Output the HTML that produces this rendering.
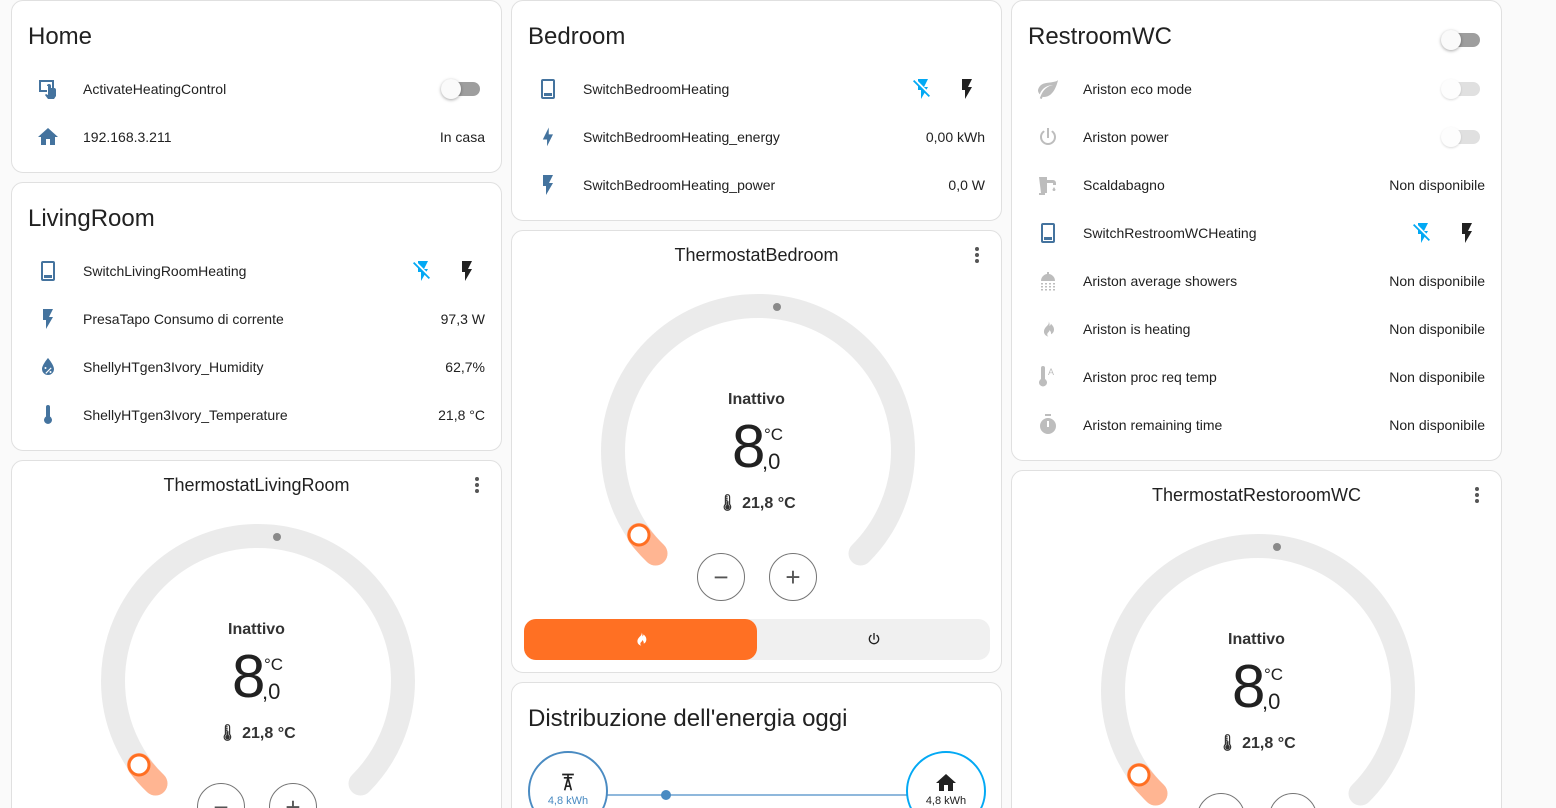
<!DOCTYPE html>
<html style="height:808px;overflow:hidden"><head><meta charset="utf-8"><style>
*{box-sizing:border-box;margin:0;padding:0}
body{width:1556px;height:808px;overflow:hidden;background:#fafafa;font-family:"Liberation Sans",Roboto,sans-serif;color:#212121;position:relative}
.card{position:absolute;background:#fff;border:1px solid #e0e0e0;border-radius:12px;overflow:hidden}
.title{position:absolute;left:16px;font-size:24px;color:#212121}
.row{position:absolute;left:0;right:0;height:40px;font-size:14px;display:flex;align-items:center}
.row svg.ic{position:absolute;left:24px;width:24px;height:24px}
.row .n{position:absolute;left:71px}
.row .v{position:absolute;right:16px}
.tg{position:absolute;right:21px;width:36px;height:14px;border-radius:7px;background:#9e9e9e}
.tg::after{content:"";position:absolute;left:-3px;top:-3px;width:20px;height:20px;border-radius:50%;background:#fafafa;box-shadow:0 1px 3px rgba(0,0,0,.35)}
.tg.d{background:#e0e0e0}
.tg.d::after{background:#fdfdfd;box-shadow:0 1px 2px rgba(0,0,0,.15)}
.th-title{position:absolute;left:0;right:0;top:14px;text-align:center;font-size:18px}
.dots{position:absolute;right:22px;top:16px;width:4px}
.dots i{display:block;width:4px;height:4px;border-radius:50%;background:#555;margin-bottom:2px}
.gauge{position:absolute;width:340px;height:300px}
.btn{position:absolute;width:48px;height:48px;border:1px solid #757575;border-radius:50%;font-size:26px;color:#555;display:flex;align-items:center;justify-content:center;font-weight:300}
.st{position:absolute;left:0;right:0;text-align:center}
</style></head><body>

<!-- Home -->
<div class="card" style="left:11px;top:0px;width:491px;height:173px">
 <div class="title" style="top:22px">Home</div>
 <div class="row" style="top:68px"><svg class="ic" viewBox="0 0 24 24" fill="#44739e"><path d="M3 3h15v10h-2V5H5v8h6v2H3z M11 9a2 2 0 0 1 4 0v2h3a2 2 0 0 1 2 2v6l-2 3h-6l-3-4 1-1 2 1V9z"/></svg><span class="n">ActivateHeatingControl</span><span class="tg"></span></div>
 <div class="row" style="top:116px"><svg class="ic" viewBox="0 0 24 24" fill="#44739e"><path d="M10,20V14H14V20H19V12H22L12,3L2,12H5V20H10Z"/></svg><span class="n">192.168.3.211</span><span class="v">In casa</span></div>
</div>

<!-- LivingRoom -->
<div class="card" style="left:11px;top:182px;width:491px;height:269px">
 <div class="title" style="top:22px">LivingRoom</div>
 <div class="row" style="top:68px"><svg class="ic" viewBox="0 0 24 24" fill="#44739e"><path d="M7 2h10a2 2 0 0 1 2 2v16a2 2 0 0 1-2 2H7a2 2 0 0 1-2-2V4a2 2 0 0 1 2-2zm0 2v16h10V4zm1 12h8v3H8z"/></svg><span class="n">SwitchLivingRoomHeating</span>
  <svg style="position:absolute;left:399px;width:24px;height:24px" viewBox="0 0 24 24" fill="#03a9f4"><path d="M17,10H13L17,2H7V4.18L15.46,12.64M3.27,3L2,4.27L7,9.27V13H10V22L13.58,15.86L17.73,20L19,18.73L3.27,3Z"/></svg>
  <svg style="position:absolute;left:443px;width:24px;height:24px" viewBox="0 0 24 24" fill="#212121"><path d="M7,2V13H10V22L17,10H13L17,2H7Z"/></svg></div>
 <div class="row" style="top:116px"><svg class="ic" viewBox="0 0 24 24" fill="#44739e"><path d="M7,2V13H10V22L17,10H13L17,2H7Z"/></svg><span class="n">PresaTapo Consumo di corrente</span><span class="v">97,3 W</span></div>
 <div class="row" style="top:164px"><svg class="ic" viewBox="0 0 24 24" fill="#44739e"><path d="M12 3s-6 7-6 11a6 6 0 0 0 12 0c0-4-6-11-6-11zm-2.5 9a1 1 0 1 1 0 2 1 1 0 0 1 0-2zm5 4a1 1 0 1 1 0 2 1 1 0 0 1 0-2zm.3-3.5l.8.8-5.4 5.4-.8-.8z"/></svg><span class="n">ShellyHTgen3Ivory_Humidity</span><span class="v">62,7%</span></div>
 <div class="row" style="top:212px"><svg class="ic" viewBox="0 0 24 24" fill="#44739e"><path d="M10 4a2 2 0 0 1 4 0v9.5a4 4 0 1 1-4 0z"/></svg><span class="n">ShellyHTgen3Ivory_Temperature</span><span class="v">21,8 °C</span></div>
</div>

<!-- Thermostat LivingRoom -->
<div class="card" style="left:11px;top:460px;width:491px;height:380px">
 <div class="th-title">ThermostatLivingRoom</div>
 <div class="dots"><i></i><i></i><i></i></div>
 <svg class="gauge" style="left:76px;top:50px" viewBox="0 0 340 300">
  <path d="M67.5 272.5 A145 145 0 1 1 272.5 272.5" fill="none" stroke="#ebebeb" stroke-width="24" stroke-linecap="round"/>
  <path d="M51 254 A145 145 0 0 0 67.5 272.5" fill="none" stroke="#ffb592" stroke-width="24" stroke-linecap="round"/>
  <circle cx="51" cy="254" r="10" fill="#fff" stroke="#ff6f22" stroke-width="3"/>
  <circle cx="189" cy="26" r="4" fill="#8a8a8a"/>
 </svg>
 <div class="st" style="top:160px;font-size:16px;font-weight:bold;color:#333">Inattivo</div>
 <div style="position:absolute;left:220px;top:186px;font-size:60px;line-height:60px">8</div>
 <div style="position:absolute;left:252px;top:194px;font-size:17px">°C</div>
 <div style="position:absolute;left:250px;top:218px;font-size:22px">,0</div>
 <div class="st" style="top:262px;font-size:16px;font-weight:bold;color:#333">🌡︎ 21,8 °C</div>
 <div class="btn" style="left:185px;top:322px">−</div>
 <div class="btn" style="left:257px;top:322px">+</div>
</div>

<!-- Bedroom -->
<div class="card" style="left:511px;top:0px;width:491px;height:221px">
 <div class="title" style="top:22px">Bedroom</div>
 <div class="row" style="top:68px"><svg class="ic" viewBox="0 0 24 24" fill="#44739e"><path d="M7 2h10a2 2 0 0 1 2 2v16a2 2 0 0 1-2 2H7a2 2 0 0 1-2-2V4a2 2 0 0 1 2-2zm0 2v16h10V4zm1 12h8v3H8z"/></svg><span class="n">SwitchBedroomHeating</span>
  <svg style="position:absolute;left:399px;width:24px;height:24px" viewBox="0 0 24 24" fill="#03a9f4"><path d="M17,10H13L17,2H7V4.18L15.46,12.64M3.27,3L2,4.27L7,9.27V13H10V22L13.58,15.86L17.73,20L19,18.73L3.27,3Z"/></svg>
  <svg style="position:absolute;left:443px;width:24px;height:24px" viewBox="0 0 24 24" fill="#212121"><path d="M7,2V13H10V22L17,10H13L17,2H7Z"/></svg></div>
 <div class="row" style="top:116px"><svg class="ic" viewBox="0 0 24 24" fill="#44739e"><path d="M11 15H6l7-14v8h5l-7 14z" transform="scale(.85) translate(2 2)"/></svg><span class="n">SwitchBedroomHeating_energy</span><span class="v">0,00 kWh</span></div>
 <div class="row" style="top:164px"><svg class="ic" viewBox="0 0 24 24" fill="#44739e"><path d="M7,2V13H10V22L17,10H13L17,2H7Z"/></svg><span class="n">SwitchBedroomHeating_power</span><span class="v">0,0 W</span></div>
</div>

<!-- Thermostat Bedroom -->
<div class="card" style="left:511px;top:230px;width:491px;height:443px">
 <div class="th-title">ThermostatBedroom</div>
 <div class="dots"><i></i><i></i><i></i></div>
 <svg class="gauge" style="left:76px;top:50px" viewBox="0 0 340 300">
  <path d="M67.5 272.5 A145 145 0 1 1 272.5 272.5" fill="none" stroke="#ebebeb" stroke-width="24" stroke-linecap="round"/>
  <path d="M51 254 A145 145 0 0 0 67.5 272.5" fill="none" stroke="#ffb592" stroke-width="24" stroke-linecap="round"/>
  <circle cx="51" cy="254" r="10" fill="#fff" stroke="#ff6f22" stroke-width="3"/>
  <circle cx="189" cy="26" r="4" fill="#8a8a8a"/>
 </svg>
 <div class="st" style="top:160px;font-size:16px;font-weight:bold;color:#333">Inattivo</div>
 <div style="position:absolute;left:220px;top:186px;font-size:60px;line-height:60px">8</div>
 <div style="position:absolute;left:252px;top:194px;font-size:17px">°C</div>
 <div style="position:absolute;left:250px;top:218px;font-size:22px">,0</div>
 <div class="st" style="top:262px;font-size:16px;font-weight:bold;color:#333">🌡︎ 21,8 °C</div>
 <div class="btn" style="left:185px;top:322px">−</div>
 <div class="btn" style="left:257px;top:322px">+</div>
 <div style="position:absolute;left:12px;top:388px;width:466px;height:41px;border-radius:12px;background:#f0f0f0"></div>
 <div style="position:absolute;left:12px;top:388px;width:233px;height:41px;border-radius:12px;background:#ff7023"></div>
 <svg style="position:absolute;left:121px;top:400px;width:16px;height:16px" viewBox="0 0 24 24" fill="#fff"><path d="M13 2c1 4-3 6-5 9-2 3-2 7 1 9.5 1 .8 2.3 1.3 3.5 1.5-1.5-1-2-3-1-4.5 1-1.5 2.5-2 2.5-4 1.5 1.5 2.5 3.5 2 5.5 2.5-1 4-3.5 4-6.5 0-4-3-6-4-7.5-.5 1.5-1 2.5-2 3 .5-3-.5-5.5-1.5-6.5z"/></svg>
 <svg style="position:absolute;left:354px;top:400px;width:16px;height:16px" viewBox="0 0 24 24" fill="#212121"><path d="M16.56,5.44L15.11,6.89C16.84,7.94 18,9.83 18,12A6,6 0 0,1 12,18A6,6 0 0,1 6,12C6,9.83 7.16,7.94 8.88,6.88L7.44,5.44C5.36,6.88 4,9.28 4,12A8,8 0 0,0 12,20A8,8 0 0,0 20,12C20,9.28 18.64,6.88 16.56,5.44M13,3H11V13H13"/></svg>
</div>

<!-- Energy -->
<div class="card" style="left:511px;top:682px;width:491px;height:160px">
 <div class="title" style="top:22px">Distribuzione dell'energia oggi</div>
 <div style="position:absolute;left:95px;top:111px;width:300px;height:2px;background:#8fb8dc"></div>
 <div style="position:absolute;left:149px;top:107px;width:10px;height:10px;border-radius:50%;background:#4a8bc2"></div>
 <div style="position:absolute;left:16px;top:68px;width:80px;height:80px;border-radius:50%;border:2px solid #4a8bc2;background:#fff"></div>
 <svg style="position:absolute;left:46px;top:89px;width:20px;height:20px" viewBox="0 0 24 24" fill="none" stroke="#212121" stroke-width="2"><path d="M5 3h14M7 7h10M12 3v4M8 22l4-15 4 15M9 17h6"/></svg>
 <div style="position:absolute;left:16px;top:112px;width:80px;text-align:center;font-size:11px;color:#4a8bc2">4,8 kWh</div>
 <div style="position:absolute;left:394px;top:68px;width:80px;height:80px;border-radius:50%;border:2px solid #03a9f4;background:#fff"></div>
 <svg style="position:absolute;left:422px;top:88px;width:24px;height:24px" viewBox="0 0 24 24" fill="#212121"><path d="M10,20V14H14V20H19V12H22L12,3L2,12H5V20H10Z"/></svg>
 <div style="position:absolute;left:394px;top:112px;width:80px;text-align:center;font-size:11px">4,8 kWh</div>
</div>

<!-- RestroomWC -->
<div class="card" style="left:1011px;top:0px;width:491px;height:461px">
 <div class="title" style="top:22px">RestroomWC</div>
 <span class="tg" style="top:32px"></span>
 <div class="row" style="top:68px"><svg class="ic" viewBox="0 0 24 24" fill="#bdbdbd"><path d="M17 8C8 10 5.9 16.2 3.8 21.3l1.9.7 1-2.3c.5.2 1 .3 1.3.3C19 20 22 3 22 3c-1 2-8 2.3-13 3.2S2 11.5 2 13.5c0 2 1.8 3.8 1.8 3.8C7 8 17 8 17 8z"/></svg><span class="n">Ariston eco mode</span><span class="tg d"></span></div>
 <div class="row" style="top:116px"><svg class="ic" viewBox="0 0 24 24" fill="#bdbdbd"><path d="M16.56,5.44L15.11,6.89C16.84,7.94 18,9.83 18,12A6,6 0 0,1 12,18A6,6 0 0,1 6,12C6,9.83 7.16,7.94 8.88,6.88L7.44,5.44C5.36,6.88 4,9.28 4,12A8,8 0 0,0 12,20A8,8 0 0,0 20,12C20,9.28 18.64,6.88 16.56,5.44M13,3H11V13H13"/></svg><span class="n">Ariston power</span><span class="tg d"></span></div>
 <div class="row" style="top:164px"><svg class="ic" viewBox="0 0 24 24" fill="#bdbdbd"><path d="M3 4h8v3h6a3 3 0 0 1 3 3v2h-3v-2h-6v10H9v2H3v-2h2z M18 14l1.5 2.5a1.5 1.5 0 1 1-3 0z"/></svg><span class="n">Scaldabagno</span><span class="v">Non disponibile</span></div>
 <div class="row" style="top:212px"><svg class="ic" viewBox="0 0 24 24" fill="#44739e"><path d="M7 2h10a2 2 0 0 1 2 2v16a2 2 0 0 1-2 2H7a2 2 0 0 1-2-2V4a2 2 0 0 1 2-2zm0 2v16h10V4zm1 12h8v3H8z"/></svg><span class="n">SwitchRestroomWCHeating</span>
  <svg style="position:absolute;left:399px;width:24px;height:24px" viewBox="0 0 24 24" fill="#03a9f4"><path d="M17,10H13L17,2H7V4.18L15.46,12.64M3.27,3L2,4.27L7,9.27V13H10V22L13.58,15.86L17.73,20L19,18.73L3.27,3Z"/></svg>
  <svg style="position:absolute;left:443px;width:24px;height:24px" viewBox="0 0 24 24" fill="#212121"><path d="M7,2V13H10V22L17,10H13L17,2H7Z"/></svg></div>
 <div class="row" style="top:260px"><svg class="ic" viewBox="0 0 24 24" fill="#bdbdbd"><path d="M11 3h2v2a7 7 0 0 1 6 7H5a7 7 0 0 1 6-7z M5 14h2v1.5H5zm4 0h2v1.5H9zm4 0h2v1.5h-2zm4 0h2v1.5h-2zM5 17h2v1.5H5zm4 0h2v1.5H9zm4 0h2v1.5h-2zm4 0h2v1.5h-2zM5 20h2v1.5H5zm4 0h2v1.5H9zm4 0h2v1.5h-2zm4 0h2v1.5h-2z"/></svg><span class="n">Ariston average showers</span><span class="v">Non disponibile</span></div>
 <div class="row" style="top:308px"><svg class="ic" viewBox="0 0 24 24" fill="#bdbdbd"><path d="M13 2c1 4-3 6-5 9-2 3-2 7 1 9.5 1 .8 2.3 1.3 3.5 1.5-1.5-1-2-3-1-4.5 1-1.5 2.5-2 2.5-4 1.5 1.5 2.5 3.5 2 5.5 2.5-1 4-3.5 4-6.5 0-4-3-6-4-7.5-.5 1.5-1 2.5-2 3 .5-3-.5-5.5-1.5-6.5z" transform="translate(3 3) scale(.75)"/></svg><span class="n">Ariston is heating</span><span class="v">Non disponibile</span></div>
 <div class="row" style="top:356px"><svg class="ic" viewBox="0 0 24 24" fill="#bdbdbd"><path d="M5 3a2 2 0 0 1 4 0v11a4 4 0 1 1-4 0z"/><text x="12" y="10" font-size="9" font-family="Liberation Sans" fill="#bdbdbd">A</text></svg><span class="n">Ariston proc req temp</span><span class="v">Non disponibile</span></div>
 <div class="row" style="top:404px"><svg class="ic" viewBox="0 0 24 24" fill="#bdbdbd"><path d="M9 1h6v2H9z M12 5a8 8 0 1 1 0 16 8 8 0 0 1 0-16zm-1 3v6h2V8z"/></svg><span class="n">Ariston remaining time</span><span class="v">Non disponibile</span></div>
</div>

<!-- Thermostat WC -->
<div class="card" style="left:1011px;top:470px;width:491px;height:380px">
 <div class="th-title">ThermostatRestoroomWC</div>
 <div class="dots"><i></i><i></i><i></i></div>
 <svg class="gauge" style="left:76px;top:50px" viewBox="0 0 340 300">
  <path d="M67.5 272.5 A145 145 0 1 1 272.5 272.5" fill="none" stroke="#ebebeb" stroke-width="24" stroke-linecap="round"/>
  <path d="M51 254 A145 145 0 0 0 67.5 272.5" fill="none" stroke="#ffb592" stroke-width="24" stroke-linecap="round"/>
  <circle cx="51" cy="254" r="10" fill="#fff" stroke="#ff6f22" stroke-width="3"/>
  <circle cx="189" cy="26" r="4" fill="#8a8a8a"/>
 </svg>
 <div class="st" style="top:160px;font-size:16px;font-weight:bold;color:#333">Inattivo</div>
 <div style="position:absolute;left:220px;top:186px;font-size:60px;line-height:60px">8</div>
 <div style="position:absolute;left:252px;top:194px;font-size:17px">°C</div>
 <div style="position:absolute;left:250px;top:218px;font-size:22px">,0</div>
 <div class="st" style="top:262px;font-size:16px;font-weight:bold;color:#333">🌡︎ 21,8 °C</div>
 <div class="btn" style="left:185px;top:322px">−</div>
 <div class="btn" style="left:257px;top:322px">+</div>
</div>
</body></html>
